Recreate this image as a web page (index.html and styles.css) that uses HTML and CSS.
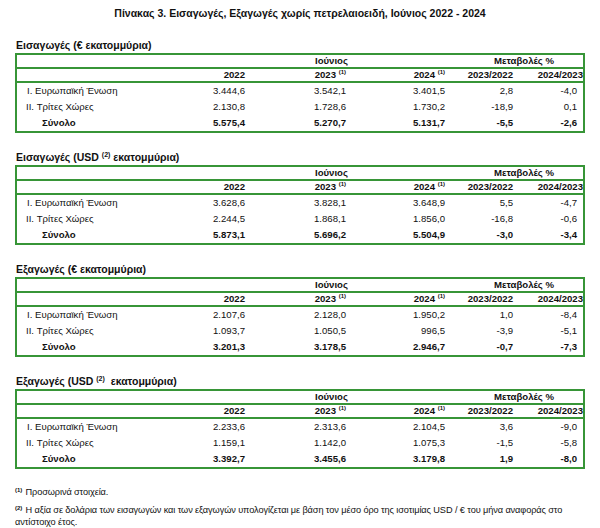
FILE: index.html
```html
<!DOCTYPE html>
<html lang="el">
<head>
<meta charset="utf-8">
<link rel="stylesheet" href="styles.css">
</head>
<body>
<div class="page">
  <h1 class="title">Πίνακας 3. Εισαγωγές, Εξαγωγές χωρίς πετρελαιοειδή, Ιούνιος 2022 - 2024</h1>

  <section class="block">
    <h2 class="heading">Εισαγωγές (€ εκατομμύρια)</h2>
    <table class="data">
      <colgroup><col class="c1"><col class="c2"><col class="c3"><col class="c4"><col class="c5"><col class="c6"></colgroup>
      <tr class="h1"><td></td><td colspan="3" class="month">Ιούνιος</td><td colspan="2" class="chg">Μεταβολές %</td></tr>
      <tr class="h2"><td></td><td>2022</td><td>2023 <sup>(1)</sup></td><td>2024 <sup>(1)</sup></td><td>2023/2022</td><td class="last">2024/2023</td></tr>
      <tr><td class="lab">I. Ευρωπαϊκή Ένωση</td><td>3.444,6</td><td>3.542,1</td><td>3.401,5</td><td>2,8</td><td>-4,0</td></tr>
      <tr><td class="lab">II. Τρίτες Χώρες</td><td>2.130,8</td><td>1.728,6</td><td>1.730,2</td><td>-18,9</td><td>0,1</td></tr>
      <tr class="tot"><td class="lab">Σύνολο</td><td>5.575,4</td><td>5.270,7</td><td>5.131,7</td><td>-5,5</td><td>-2,6</td></tr>
    </table>
  </section>

  <section class="block">
    <h2 class="heading">Εισαγωγές (USD <sup>(2)</sup> εκατομμύρια)</h2>
    <table class="data">
      <colgroup><col class="c1"><col class="c2"><col class="c3"><col class="c4"><col class="c5"><col class="c6"></colgroup>
      <tr class="h1"><td></td><td colspan="3" class="month">Ιούνιος</td><td colspan="2" class="chg">Μεταβολές %</td></tr>
      <tr class="h2"><td></td><td>2022</td><td>2023 <sup>(1)</sup></td><td>2024 <sup>(1)</sup></td><td>2023/2022</td><td class="last">2024/2023</td></tr>
      <tr><td class="lab">I. Ευρωπαϊκή Ένωση</td><td>3.628,6</td><td>3.828,1</td><td>3.648,9</td><td>5,5</td><td>-4,7</td></tr>
      <tr><td class="lab">II. Τρίτες Χώρες</td><td>2.244,5</td><td>1.868,1</td><td>1.856,0</td><td>-16,8</td><td>-0,6</td></tr>
      <tr class="tot"><td class="lab">Σύνολο</td><td>5.873,1</td><td>5.696,2</td><td>5.504,9</td><td>-3,0</td><td>-3,4</td></tr>
    </table>
  </section>

  <section class="block">
    <h2 class="heading">Εξαγωγές (€ εκατομμύρια)</h2>
    <table class="data">
      <colgroup><col class="c1"><col class="c2"><col class="c3"><col class="c4"><col class="c5"><col class="c6"></colgroup>
      <tr class="h1"><td></td><td colspan="3" class="month">Ιούνιος</td><td colspan="2" class="chg">Μεταβολές %</td></tr>
      <tr class="h2"><td></td><td>2022</td><td>2023 <sup>(1)</sup></td><td>2024 <sup>(1)</sup></td><td>2023/2022</td><td class="last">2024/2023</td></tr>
      <tr><td class="lab">I. Ευρωπαϊκή Ένωση</td><td>2.107,6</td><td>2.128,0</td><td>1.950,2</td><td>1,0</td><td>-8,4</td></tr>
      <tr><td class="lab">II. Τρίτες Χώρες</td><td>1.093,7</td><td>1.050,5</td><td>996,5</td><td>-3,9</td><td>-5,1</td></tr>
      <tr class="tot"><td class="lab">Σύνολο</td><td>3.201,3</td><td>3.178,5</td><td>2.946,7</td><td>-0,7</td><td>-7,3</td></tr>
    </table>
  </section>

  <section class="block">
    <h2 class="heading">Εξαγωγές (USD <sup>(2)</sup>&nbsp; εκατομμύρια)</h2>
    <table class="data">
      <colgroup><col class="c1"><col class="c2"><col class="c3"><col class="c4"><col class="c5"><col class="c6"></colgroup>
      <tr class="h1"><td></td><td colspan="3" class="month">Ιούνιος</td><td colspan="2" class="chg">Μεταβολές %</td></tr>
      <tr class="h2"><td></td><td>2022</td><td>2023 <sup>(1)</sup></td><td>2024 <sup>(1)</sup></td><td>2023/2022</td><td class="last">2024/2023</td></tr>
      <tr><td class="lab">I. Ευρωπαϊκή Ένωση</td><td>2.233,6</td><td>2.313,6</td><td>2.104,5</td><td>3,6</td><td>-9,0</td></tr>
      <tr><td class="lab">II. Τρίτες Χώρες</td><td>1.159,1</td><td>1.142,0</td><td>1.075,3</td><td>-1,5</td><td>-5,8</td></tr>
      <tr class="tot"><td class="lab">Σύνολο</td><td>3.392,7</td><td>3.455,6</td><td>3.179,8</td><td>1,9</td><td>-8,0</td></tr>
    </table>
  </section>

  <div class="notes">
    <p class="note"><sup>(1)</sup> Προσωρινά στοιχεία.</p>
    <p class="note"><sup>(2)</sup> <span>Η αξία σε δολάρια των εισαγωγών και των εξαγωγών υπολογίζεται με βάση τον μέσο όρο της ισοτιμίας USD / € του μήνα αναφοράς στο</span> <span class="l2">αντίστοιχο έτος.</span></p>
  </div>
</div>
</body>
</html>
```

FILE: styles.css
```css
html, body {
  margin: 0;
  padding: 0;
  background: #ffffff;
}

body {
  font-family: "Liberation Sans", Arial, sans-serif;
  color: #111111;
}

.page {
  width: 600px;
  padding: 6px 0 0 15px;
  box-sizing: border-box;
}

.title {
  margin: 0 15px 0 0;
  font-size: 10.5px;
  line-height: 14px;
  font-weight: bold;
  text-align: center;
}

.block {
  margin-top: 17px;
}

.block:first-of-type {
  margin-top: 18px;
}

.heading {
  margin: 0 0 1px 1px;
  font-size: 10.5px;
  line-height: 14px;
  font-weight: bold;
  white-space: pre;
}

.heading sup {
  font-size: 7px;
  line-height: 0;
  vertical-align: 4px;
  font-weight: bold;
}

.h2 sup,
.note sup {
  font-size: 6px;
  line-height: 0;
  vertical-align: 4px;
  font-weight: bold;
}

.note sup {
  display: inline-block;
  line-height: 6px;
  vertical-align: 3px;
  margin-right: 1px;
}

.data {
  width: 570px;
  table-layout: fixed;
  border-collapse: separate;
  border-spacing: 0;
  border: 2px solid #379537;
  font-size: 9.6px;
}

.c1 { width: 158px; }
.c2 { width: 72px; }
.c3 { width: 101px; }
.c4 { width: 99px; }
.c5 { width: 68px; }
.c6 { width: 68px; }

.data td {
  padding: 0 2px 0 0;
  text-align: right;
  white-space: nowrap;
  height: 16px;
  line-height: 16px;
}

.data .h1 td,
.data .h2 td {
  font-weight: bold;
  height: 12px;
  line-height: 12px;
  border-bottom: 2px solid #379537;
}

.data .h2 td.last {
  padding-right: 0;
}

.data td:last-child {
  padding-right: 6px;
}

.data .h1 td.month {
  text-align: left;
  padding-left: 140px;
}

.data .h1 td.chg {
  text-align: center;
  padding: 0 0 0 18px;
}

.data td.lab {
  text-align: left;
  padding-left: 10px;
}

.data tr:nth-child(4) td.lab {
  padding-left: 9px;
}

.data .tot td {
  font-weight: bold;
}

.data .tot td.lab {
  padding-left: 25px;
}

.notes {
  margin-top: 17px;
  width: 570px;
}

.note {
  margin: 0 0 6px 0;
  font-size: 9.2px;
  line-height: 12px;
  letter-spacing: -0.1px;
}

.note .l2 {
  white-space: nowrap;
}
```
